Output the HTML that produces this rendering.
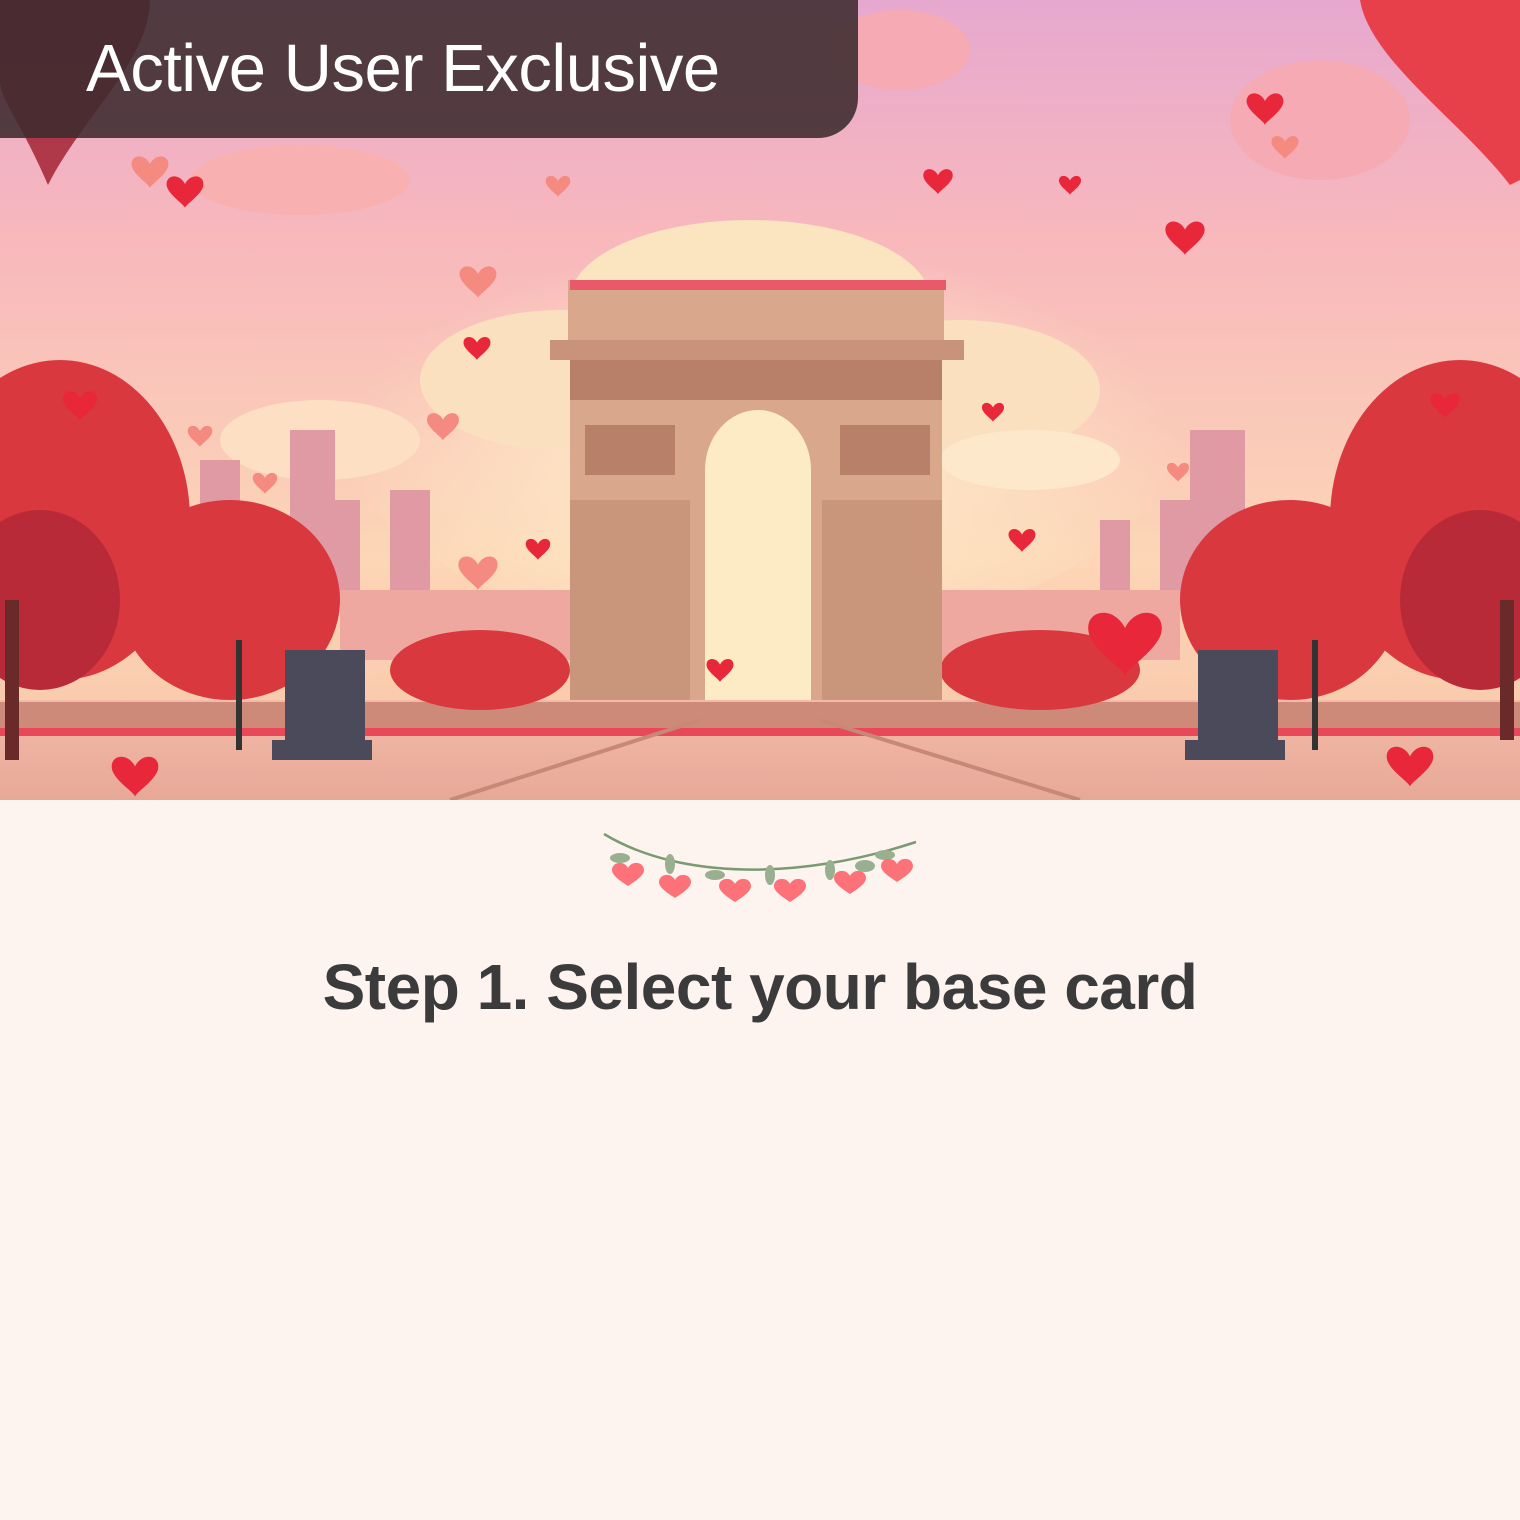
<!DOCTYPE html>
<html><head><meta charset="utf-8"><style>
body{margin:0;width:1520px;height:1520px;background:#fdf4f0;overflow:hidden;font-family:"Liberation Sans",sans-serif;position:relative}
.hero{position:absolute;left:0;top:0;width:1520px;height:800px}
.banner{position:absolute;left:0;top:0;width:858px;height:138px;background:rgba(60,42,46,0.88);border-bottom-right-radius:40px}
.banner span{position:absolute;left:86px;top:30px;font-size:67px;color:#fff;letter-spacing:-0.5px}
h1{position:absolute;left:0;width:1520px;top:950px;margin:0;text-align:center;font-size:64px;font-weight:bold;color:#3b3b3b;letter-spacing:-0.5px}
</style></head><body>
<svg class="hero" viewBox="0 0 1520 800">
<defs>
<linearGradient id="sky" x1="0" y1="0" x2="0" y2="1"><stop offset="0" stop-color="#e6a8cf"/><stop offset="0.3" stop-color="#f8b8bc"/><stop offset="0.7" stop-color="#fcd6b6"/><stop offset="1" stop-color="#f8c4a8"/></linearGradient>
<linearGradient id="ground" x1="0" y1="0" x2="0" y2="1"><stop offset="0" stop-color="#f2bba8"/><stop offset="1" stop-color="#e8a898"/></linearGradient>
<radialGradient id="glow" cx="0.5" cy="0.6" r="0.5"><stop offset="0" stop-color="#fff0cc"/><stop offset="1" stop-color="#fff0cc" stop-opacity="0"/></radialGradient>
<path id="h" d="M0,6 C-4,-2 -14,0 -12,8 C-10,14 0,20 0,22 C0,20 10,14 12,8 C14,0 4,-2 0,6Z"/>
</defs>
<rect width="1520" height="800" fill="url(#sky)"/>
<ellipse cx="760" cy="420" rx="420" ry="220" fill="url(#glow)"/>
<ellipse cx="750" cy="300" rx="180" ry="80" fill="#fbe4c0"/>
<ellipse cx="560" cy="380" rx="140" ry="70" fill="#fbe0c0"/>
<ellipse cx="960" cy="390" rx="140" ry="70" fill="#fbe0c0"/>
<ellipse cx="320" cy="440" rx="100" ry="40" fill="#fde0c4"/>
<ellipse cx="1030" cy="460" rx="90" ry="30" fill="#fde8cc"/>
<ellipse cx="900" cy="50" rx="70" ry="40" fill="#f6aab4"/>
<ellipse cx="1320" cy="120" rx="90" ry="60" fill="#f6aab4"/>
<ellipse cx="300" cy="180" rx="110" ry="35" fill="#f8b0b0"/>
<g fill="#e09aa4">
<rect x="200" y="460" width="40" height="140"/><rect x="290" y="430" width="45" height="170"/><rect x="330" y="500" width="30" height="100"/><rect x="390" y="490" width="40" height="110"/>
<rect x="1190" y="430" width="55" height="170"/><rect x="1160" y="500" width="40" height="100"/><rect x="1100" y="520" width="30" height="80"/>
</g>
<rect x="340" y="590" width="840" height="70" fill="#eea8a0"/>
<rect x="0" y="700" width="1520" height="100" fill="url(#ground)"/>
<rect x="0" y="702" width="1520" height="28" fill="#b86a5a" opacity="0.6"/>
<rect x="0" y="728" width="1520" height="8" fill="#e8485a"/>
<path d="M700,720 L450,800 M820,720 L1080,800" stroke="#c88878" stroke-width="4"/>
<g fill="#d9383f">
<ellipse cx="60" cy="520" rx="130" ry="160"/><ellipse cx="230" cy="600" rx="110" ry="100"/><ellipse cx="1460" cy="520" rx="130" ry="160"/><ellipse cx="1290" cy="600" rx="110" ry="100"/>
<ellipse cx="480" cy="670" rx="90" ry="40"/><ellipse cx="1040" cy="670" rx="100" ry="40"/>
</g>
<g fill="#b82a38"><ellipse cx="40" cy="600" rx="80" ry="90"/><ellipse cx="1480" cy="600" rx="80" ry="90"/></g>
<rect x="5" y="600" width="14" height="160" fill="#6b2a2a"/><rect x="1500" y="600" width="14" height="140" fill="#6b2a2a"/>
<g>
<rect x="568" y="280" width="376" height="60" fill="#d9a88c"/>
<rect x="550" y="340" width="414" height="20" fill="#c8937a"/>
<rect x="570" y="360" width="372" height="340" fill="#d9a88c"/>
<rect x="570" y="360" width="372" height="40" fill="#b88068"/>
<path d="M705,700 L705,470 A53,60 0 0 1 811,470 L811,700 Z" fill="#fdebc6"/>
<rect x="585" y="425" width="90" height="50" fill="#b88068"/><rect x="840" y="425" width="90" height="50" fill="#b88068"/>
<rect x="570" y="500" width="120" height="200" fill="#c9967c"/><rect x="822" y="500" width="120" height="200" fill="#c9967c"/>
<rect x="570" y="280" width="376" height="10" fill="#e85a6a"/>
</g>
<g fill="#4a4a5a"><rect x="285" y="650" width="80" height="100"/><rect x="272" y="740" width="100" height="20"/><rect x="1198" y="650" width="80" height="100"/><rect x="1185" y="740" width="100" height="20"/></g>
<rect x="236" y="640" width="6" height="110" fill="#333"/><rect x="1312" y="640" width="6" height="110" fill="#333"/>
<g fill="#e8283a">
<use href="#h" transform="translate(185,175) scale(1.5)"/><use href="#h" transform="translate(1185,220) scale(1.6)"/><use href="#h" transform="translate(938,168) scale(1.2)"/>
<use href="#h" transform="translate(477,336) scale(1.1)"/><use href="#h" transform="translate(538,538) scale(1)"/><use href="#h" transform="translate(1022,528) scale(1.1)"/>
<use href="#h" transform="translate(80,390) scale(1.4)"/><use href="#h" transform="translate(135,755) scale(1.9)"/><use href="#h" transform="translate(1410,745) scale(1.9)"/>
<use href="#h" transform="translate(1445,392) scale(1.2)"/><use href="#h" transform="translate(1125,610) scale(3)"/><use href="#h" transform="translate(720,658) scale(1.1)"/>
<use href="#h" transform="translate(1265,92) scale(1.5)"/><use href="#h" transform="translate(1070,175) scale(0.9)"/><use href="#h" transform="translate(993,402) scale(0.9)"/>
</g>
<g fill="#f58a80">
<use href="#h" transform="translate(150,155) scale(1.5)"/><use href="#h" transform="translate(478,265) scale(1.5)"/><use href="#h" transform="translate(443,412) scale(1.3)"/>
<use href="#h" transform="translate(478,555) scale(1.6)"/><use href="#h" transform="translate(200,425) scale(1)"/><use href="#h" transform="translate(265,472) scale(1)"/>
<use href="#h" transform="translate(558,175) scale(1)"/><use href="#h" transform="translate(1285,135) scale(1.1)"/><use href="#h" transform="translate(1178,462) scale(0.9)"/>
</g>
<path d="M0,0 L150,0 C150,60 80,120 48,185 C20,120 0,100 0,80Z" fill="#9e1a2a" opacity="0.8"/>
<path d="M1360,0 L1520,0 L1520,180 L1510,185 C1460,120 1370,60 1360,0Z" fill="#e8404a"/>
</svg>
<div class="banner"><span>Active User Exclusive</span></div>
<svg style="position:absolute;left:600px;top:830px" width="320" height="80" viewBox="0 0 320 80">
<path d="M4,4 C80,50 200,50 316,12" stroke="#7a9a72" stroke-width="2.5" fill="none"/>
<g fill="#98b090"><ellipse cx="20" cy="28" rx="10" ry="5"/><ellipse cx="70" cy="34" rx="5" ry="10"/><ellipse cx="115" cy="45" rx="10" ry="5"/><ellipse cx="170" cy="45" rx="5" ry="10"/><ellipse cx="230" cy="40" rx="5" ry="10"/><ellipse cx="265" cy="36" rx="10" ry="6"/><ellipse cx="285" cy="25" rx="10" ry="5"/></g>
<g fill="#fd7278">
<path d="M28,38 c-4,-8 -16,-6 -16,2 c0,6 10,12 16,16 c6,-4 16,-10 16,-16 c0,-8 -12,-10 -16,-2z"/>
<path d="M75,50 c-4,-8 -16,-6 -16,2 c0,6 10,12 16,16 c6,-4 16,-10 16,-16 c0,-8 -12,-10 -16,-2z"/>
<path d="M135,54 c-4,-8 -16,-6 -16,2 c0,6 10,12 16,16 c6,-4 16,-10 16,-16 c0,-8 -12,-10 -16,-2z"/>
<path d="M190,54 c-4,-8 -16,-6 -16,2 c0,6 10,12 16,16 c6,-4 16,-10 16,-16 c0,-8 -12,-10 -16,-2z"/>
<path d="M250,46 c-4,-8 -16,-6 -16,2 c0,6 10,12 16,16 c6,-4 16,-10 16,-16 c0,-8 -12,-10 -16,-2z"/>
<path d="M297,34 c-4,-8 -16,-6 -16,2 c0,6 10,12 16,16 c6,-4 16,-10 16,-16 c0,-8 -12,-10 -16,-2z"/>
</g>
</svg>
<h1>Step 1. Select your base card</h1>
</body></html>
